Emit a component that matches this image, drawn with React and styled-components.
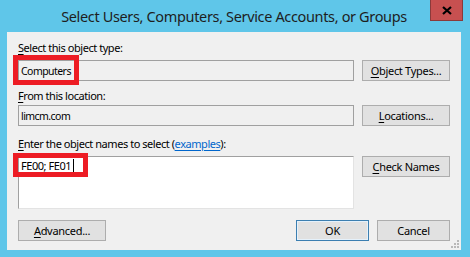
import styled, {createGlobalStyle} from 'styled-components';

const Global = createGlobalStyle`
  html, body {
    margin: 0;
    padding: 0;
    background: #5fc6e9;
  }
  body {
    font-family: "Noto Sans", "Open Sans", sans-serif;
  }
`;

const Window = styled.div`
  width: 470px;
  height: 257px;
  background: #5fc6e9;
  display: flex;
  flex-flow: column;
  box-sizing: border-box;
  padding: 0 9px 7px 7px;
  position: relative;
`;

const TitleBar = styled.div`
  height: 32px;
  display: flex;
  align-items: center;
  justify-content: center;
  position: relative;
`;

const Title = styled.div`
  font-size: 14.5px;
  letter-spacing: -0.35px;
  color: #1e1e1e;
  margin-top: -1px;
`;

const Close = styled.div`
  position: absolute;
  top: 0;
  right: -2px;
  width: 33px;
  height: 21px;
  box-sizing: border-box;
  background: #c75050;
  border: 1px solid #8b3a3a;
  border-top: none;
  display: flex;
  align-items: center;
  justify-content: center;
`;

const Panel = styled.div`
  flex: 1;
  background: #f0f0f0;
  display: flex;
  flex-flow: column;
  padding: 8px 11px 9px 11px;
  font-size: 11px;
  letter-spacing: -0.45px;
  color: #000;
  position: relative;
`;

const Label = styled.div`
  line-height: 15px;
  height: 15px;
  margin-top: ${p => p.top}px;
  margin-bottom: ${p => p.gap}px;
  white-space: nowrap;
`;

const Key = styled.span`
  text-decoration: underline;
  text-underline-offset: 2px;
`;

const Link = styled.span`
  color: #0066cc;
  text-decoration: underline;
  text-underline-offset: 2px;
`;

const Row = styled.div`
  display: flex;
  gap: 8px;
  align-items: flex-start;
`;

const Field = styled.div`
  width: 336px;
  height: 21px;
  box-sizing: border-box;
  border: 1px solid #a0a0a0;
  background: #f0f0f0;
  display: flex;
  align-items: center;
  padding-left: 2px;
  font-size: 10.5px;
  letter-spacing: -0.55px;
  position: relative;
  white-space: nowrap;
`;

const Names = styled.div`
  width: 336px;
  height: 53px;
  box-sizing: border-box;
  background: #fff;
  border-style: solid;
  border-width: 1px;
  border-color: #a0a0a0 #e3e3e3 #e3e3e3 #a0a0a0;
  padding: 1px 0 0 2px;
  line-height: 15px;
  position: relative;
  white-space: nowrap;
`;

const Resolved = styled.span`
  text-decoration: underline;
  text-underline-offset: 2px;
`;

const Caret = styled.span`
  display: inline-block;
  width: 1px;
  height: 14px;
  background: #000;
  vertical-align: -3px;
  margin-left: 2px;
`;

const Button = styled.div`
  width: ${p => p.w || 88}px;
  height: 21px;
  box-sizing: border-box;
  background: #e1e1e1;
  border: 1px solid ${p => (p.primary ? '#3c7fb1' : '#adadad')};
  box-shadow: ${p => (p.primary ? 'inset 0 0 0 1px #e5f1fb' : 'none')};
  display: flex;
  align-items: center;
  justify-content: center;
  letter-spacing: -0.3px;
  white-space: nowrap;
`;

const Footer = styled.div`
  margin-top: 11px;
  display: flex;
  align-items: center;
  gap: 8px;
`;

const Spacer = styled.div`
  flex: 1;
`;

const Highlight = styled.div`
  position: absolute;
  left: ${p => p.x}px;
  top: ${p => p.y}px;
  width: ${p => p.w}px;
  height: ${p => p.h}px;
  box-sizing: border-box;
  border: 5px solid #ed1c24;
  pointer-events: none;
`;

const Grip = styled.svg`
  position: absolute;
  right: 2px;
  bottom: 2px;
`;

export default function App() {
  return (
    <Window>
      <Global/>
      <TitleBar>
        <Title>Select Users, Computers, Service Accounts, or Groups</Title>
        <Close>
          <svg width="10" height="9" viewBox="0 0 10 9">
            <path d="M1 1 L9 8 M9 1 L1 8" stroke="#000" strokeWidth="2.2"/>
          </svg>
        </Close>
      </TitleBar>
      <Panel>
        <Label top={0} gap={5}><Key>S</Key>elect this object type:</Label>
        <Row>
          <Field>
            Computers
            <Highlight x={-6} y={-6} w={66} h={30}/>
          </Field>
          <Button><Key>O</Key>bject Types...</Button>
        </Row>
        <Label top={7} gap={2}><Key>F</Key>rom this location:</Label>
        <Row>
          <Field>limcm.com</Field>
          <Button><Key>L</Key>ocations...</Button>
        </Row>
        <Label top={10} gap={5}>
          <Key>E</Key>nter the object names to select (<Link>examples</Link>):
        </Label>
        <Row>
          <Names>
            <Resolved>FE00</Resolved>; <Resolved>FE01</Resolved><Caret/>
            <Highlight x={-6} y={-4} w={75} h={24}/>
          </Names>
          <Button><Key>C</Key>heck Names</Button>
        </Row>
        <Footer>
          <Button><Key>A</Key>dvanced...</Button>
          <Spacer/>
          <Button primary w={73}>OK</Button>
          <Button w={73}>Cancel</Button>
        </Footer>
        <Grip width="8" height="8" viewBox="0 0 8 8">
          <g fill="#b8b8b8">
            <rect x="6" y="0" width="2" height="2"/>
            <rect x="3" y="3" width="2" height="2"/>
            <rect x="6" y="3" width="2" height="2"/>
            <rect x="0" y="6" width="2" height="2"/>
            <rect x="3" y="6" width="2" height="2"/>
            <rect x="6" y="6" width="2" height="2"/>
          </g>
        </Grip>
      </Panel>
    </Window>
  );
}
